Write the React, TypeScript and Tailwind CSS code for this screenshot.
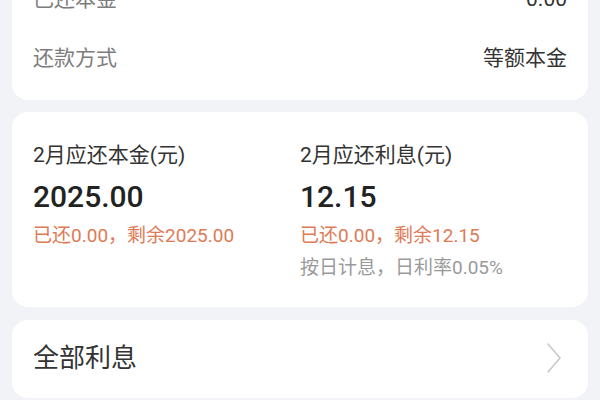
const FONT = { fontFamily: '"Roboto", "Noto Sans CJK SC", sans-serif' };

function InfoRow({ label, value }: { label: string; value: string }) {
  return (
    <div className="flex h-[59px] items-center justify-between">
      <span className="text-[21px] leading-7 text-[#7d7d7d]">{label}</span>
      <span className="text-[21px] leading-7 text-[#333333]">{value}</span>
    </div>
  );
}

type DueColumnProps = {
  title: string;
  amount: string;
  paid: string;
  remain: string;
  note?: string;
};

function DueColumn({ title, amount, paid, remain, note }: DueColumnProps) {
  return (
    <div className="flex flex-col">
      <div className="text-[21px] leading-7 text-[#333333]">{title}</div>
      <div className="mt-[10px] text-[30px] font-medium leading-9 text-[#222222]">{amount}</div>
      <div className="mt-[9px] text-[19px] leading-6 text-[#e07a55]">
        已还{paid}，剩余{remain}
      </div>
      {note ? <div className="mt-2 text-[19px] leading-6 text-[#9a9a9a]">{note}</div> : null}
    </div>
  );
}

export default function App() {
  return (
    <div className="h-[400px] w-[600px] overflow-hidden bg-[#f1f3f6] px-3" style={FONT}>
      <div className="-mt-[45px] rounded-2xl bg-white px-[21px] pb-[13px] pt-[14px]">
        <InfoRow label="已还本金" value="0.00" />
        <InfoRow label="还款方式" value="等额本金" />
      </div>

      <div className="mt-3 grid grid-cols-2 rounded-2xl bg-white px-[21px] pb-[27px] pt-[29px]">
        <DueColumn title="2月应还本金(元)" amount="2025.00" paid="0.00" remain="2025.00" />
        <DueColumn
          title="2月应还利息(元)"
          amount="12.15"
          paid="0.00"
          remain="12.15"
          note="按日计息，日利率0.05%"
        />
      </div>

      <div className="mt-[13px] flex items-center justify-between rounded-2xl bg-white pb-6 pl-[21px] pr-[27px] pt-[22px]">
        <span className="text-[26px] leading-8 text-[#333333]">全部利息</span>
        <svg width="14" height="30" viewBox="0 0 14 30" fill="none" className="shrink-0">
          <polyline points="1,1 13,15 1,29" stroke="#c8c8c8" strokeWidth="1.5" strokeLinecap="round" strokeLinejoin="round" />
        </svg>
      </div>
    </div>
  );
}
